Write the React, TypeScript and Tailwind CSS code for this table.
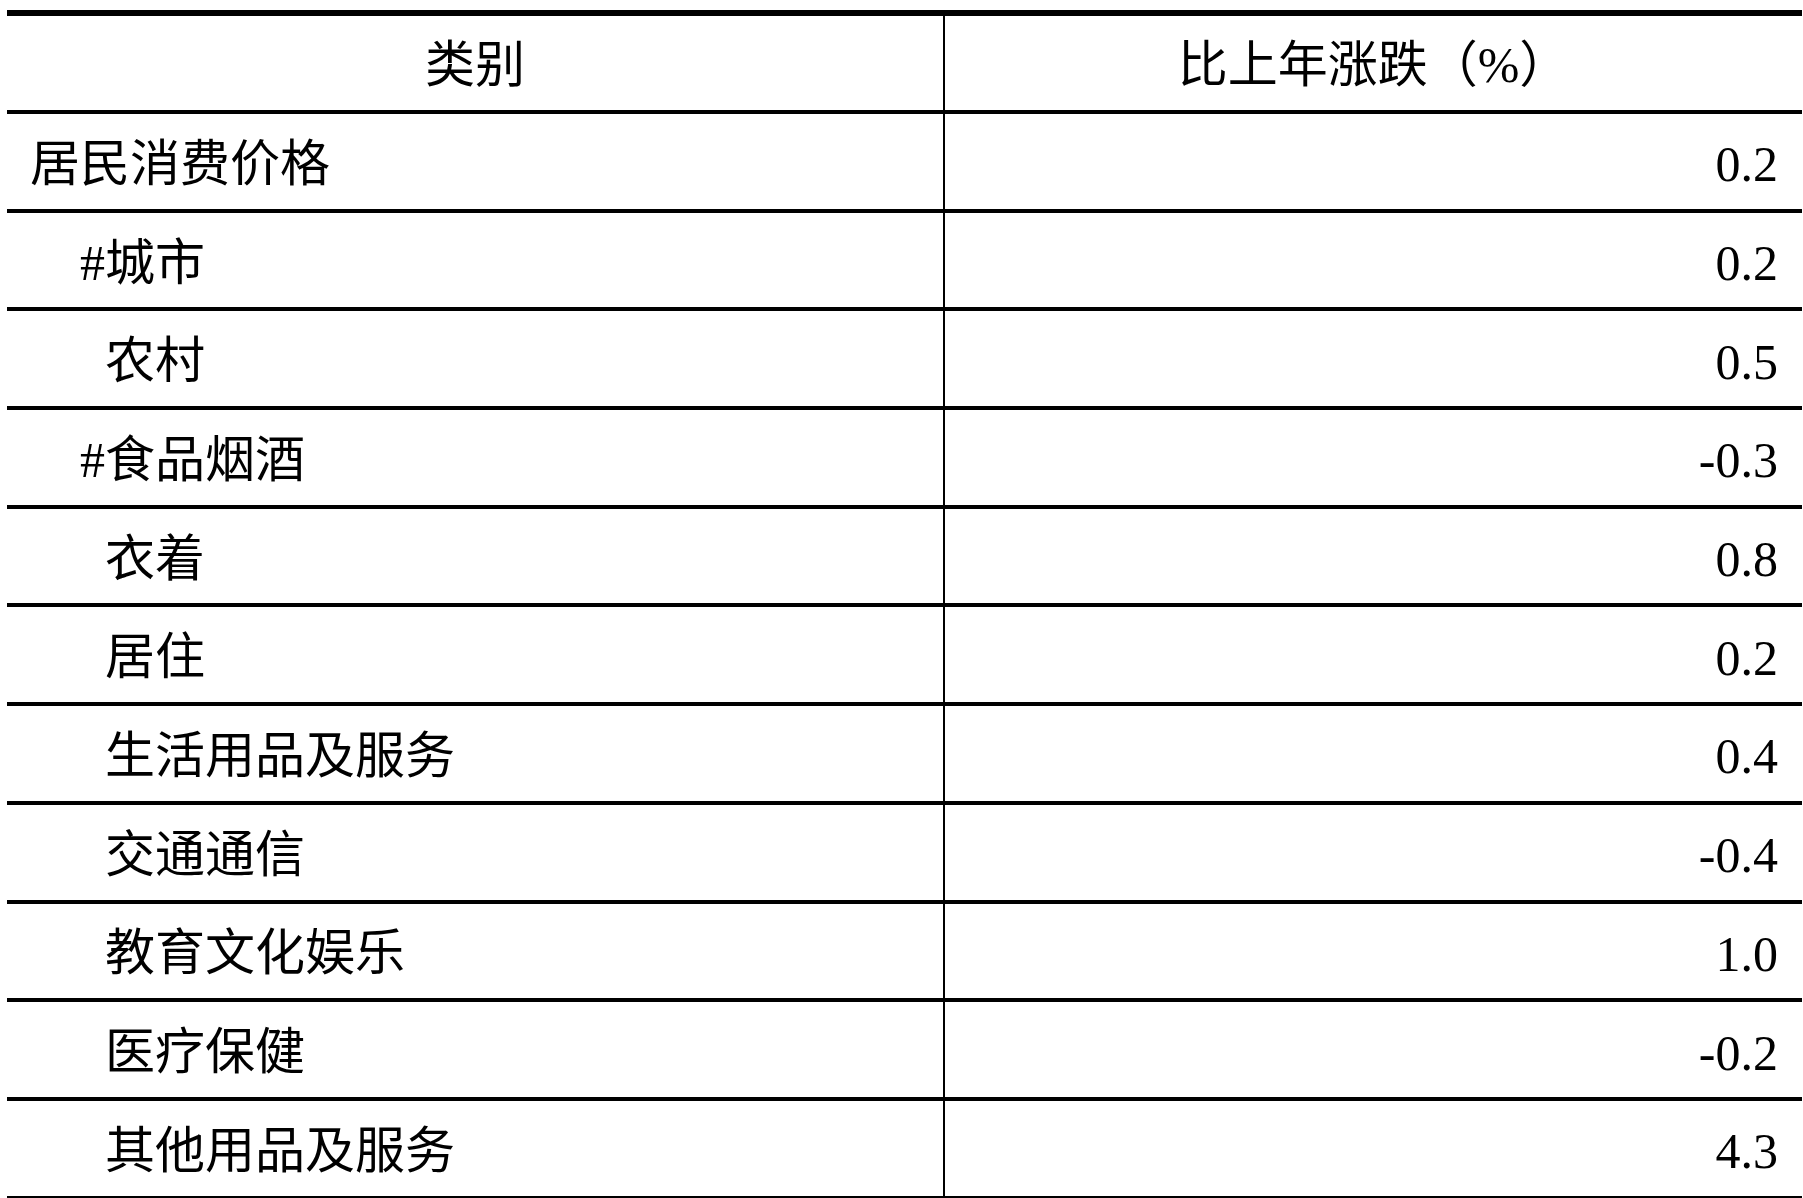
import React from "react";

type Row = { name: string; value: string; level: 0 | 1 | 2 };

const rows: Row[] = [
  { name: "居民消费价格", value: "0.2", level: 0 },
  { name: "#城市", value: "0.2", level: 1 },
  { name: "农村", value: "0.5", level: 2 },
  { name: "#食品烟酒", value: "-0.3", level: 1 },
  { name: "衣着", value: "0.8", level: 2 },
  { name: "居住", value: "0.2", level: 2 },
  { name: "生活用品及服务", value: "0.4", level: 2 },
  { name: "交通通信", value: "-0.4", level: 2 },
  { name: "教育文化娱乐", value: "1.0", level: 2 },
  { name: "医疗保健", value: "-0.2", level: 2 },
  { name: "其他用品及服务", value: "4.3", level: 2 },
];

const indent = ["pl-[23px]", "pl-[73px]", "pl-[98px]"];

export default function App() {
  return (
    <div className="w-[1803px] h-[1198px] overflow-hidden bg-white text-black font-['Liberation_Serif','Noto_Sans_CJK_SC',serif]">
      <div className="ml-[7px] mt-[10px] w-[1795px] border-t-[6px] border-black">
        {/* header */}
        <div className="grid grid-cols-[938px_1fr] h-[98px] border-b-4 border-black text-[50px] leading-none">
          <div className="flex items-center justify-center border-r-2 border-black pt-[4px]">
            类别
          </div>
          <div className="flex items-center justify-center pt-[4px]">比上年涨跌（%）</div>
        </div>

        {/* body */}
        {rows.map((r) => (
          <div
            key={r.name}
            className="grid grid-cols-[938px_1fr] h-[98.7px] border-b-4 border-black text-[50px] leading-none"
          >
            <div className={"flex items-center border-r-2 border-black pt-[5px] " + indent[r.level]}>
              {r.name}
            </div>
            <div className="flex items-center justify-end pr-[24px] pt-[6px]">{r.value}</div>
          </div>
        ))}
      </div>
    </div>
  );
}
